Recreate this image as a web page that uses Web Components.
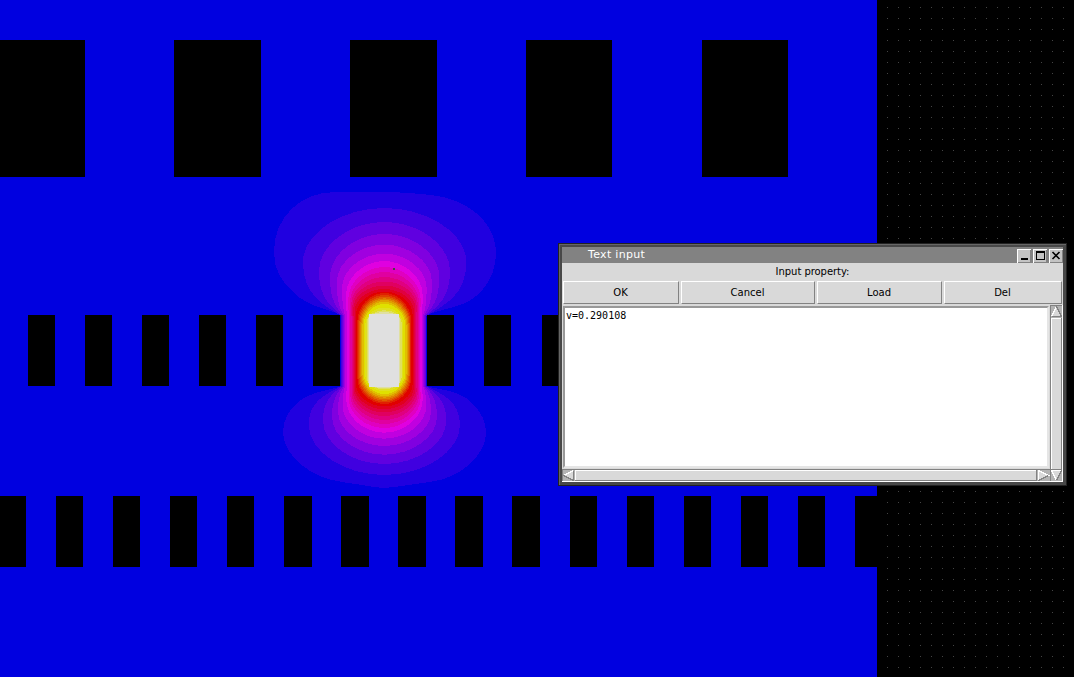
<!DOCTYPE html>
<html lang="en"><head><meta charset="utf-8"><title>Potential field</title>
<style>html,body{margin:0;background:#000;overflow:hidden}</style></head><body>
<field-app></field-app>
<script>
const define=(name,html,init)=>customElements.define(name,class extends HTMLElement{
  constructor(){super();this.attachShadow({mode:'open'}).innerHTML=html;if(init)init(this.shadowRoot,this);}
});

// Equipotential plot: nested contours under the black conductors.
define('field-plot',`<style>:host{display:block;width:1074px;height:677px}svg{display:block}</style>
<svg width="1074" height="677" shape-rendering="crispEdges">
<defs><pattern id="d" x="887" y="7" width="11" height="11" patternUnits="userSpaceOnUse"><rect width="1" height="1" fill="#444"/></pattern></defs>
<rect width="1074" height="677" fill="#000"/><rect x="887" width="187" height="677" fill="url(#d)"/>
<rect width="877" height="677" fill="#0000e0"/><g id="c"></g><g id="b" fill="#000"></g></svg>`,root=>{
  // top, upper y, upper left/right, waist left/right, lower left/right, lower y, bottom, colour
  const L=[
   [208,262,303,466.3,341.4,426.1,308.7,460,425,475,'#4000e0'],
   [222,271,319,450,342.2,425.5,323,446.3,421,464,'#6000e0'],
   [234,277,330,439.3,343,424.8,332,437,417,454.7,'#8000e0'],
   [244.7,282,336.7,432,343.8,424,338,431,412,446,'#a000e0'],
   [253.7,288,342,426.7,345,423,342.7,426.3,406,438.7,'#c000e0'],
   [261,295,346,422.7,347,421.5,346.3,422.7,400,432.7,'#e000e0'],
   [267,299,348.3,420.6,349,420.2,348.7,420.6,398,428,'#e000c0'],
   [272,302,350,419,350.4,418.7,350.3,419,395,424,'#e000a0'],
   [277,304,351.2,417.8,351.5,417.5,351.5,417.8,393,420,'#e00080'],
   [281.5,306,352.3,416.6,352.5,416.3,352.6,416.6,391,416,'#e00060'],
   [285.5,308,353.4,415.3,353.5,415.1,353.7,415.3,389,412.5,'#e00040'],
   [289,311,354.5,414,354.5,413.8,354.8,414,387,409.3,'#e00020'],
   [291.5,315,356,412.7,355.8,412.7,356,412.7,384,406.5,'#e00000'],
   [293,321,357.4,411.2,357.4,411.2,357.4,411.2,378,404,'#e02000'],
   [295,322,358.3,410.3,358.3,410.3,358.3,410.3,377,402.3,'#e04000'],
   [296.7,323,359.3,409.5,359.3,409.5,359.3,409.5,376,400.8,'#e06000'],
   [298.3,324,360.3,408.6,360.3,408.6,360.3,408.6,375,399.2,'#e08000'],
   [300,325,361.3,407.6,361.3,407.6,361.3,407.6,374,397.7,'#e0a000'],
   [301.8,325,362.4,406.5,362.4,406.5,362.4,406.5,374,396,'#e0c000'],
   [304,325,363.6,405.2,363.6,405.2,363.6,405.2,374,394,'#e0e000'],
   [307.5,324,365.4,403.2,365.4,403.2,365.4,403.2,376,391.3,'#e0e020'],
   [310.2,322,366.6,401.5,366.6,401.5,366.6,401.5,378,389.4,'#e0e060'],
   [312,320,367.6,400.4,367.6,400.4,367.6,400.4,381,388.3,'#e0e0a0']];
  let s='<path fill="#2000e0" d="M342 315C325 308 309 307 294 293C280 280 274 269 274 251C274 218 300 192 335 192L400 192.5C419 194 441 194 458 202C482 212 496 232 496 253C496 279 479 299 460 305C447 309 438 311 426 315V386C440 390 458 390 471 402C482 412 486 423 486 433C486 454 462 478 430 482C412 484 400 487 384 488C370 487 358 484 342 482C310 478 283 455 283 432C283 421 288 411 297 403C311 391 328 391 342 386Z"/>';
  for(const [t,u,a,b,w,x,p,q,v,m,f] of L){
    const c=384.3,k=.53,U=Math.max(316,u),V=Math.min(386,v);
    s+=`<path fill="${f}" d="M${w} ${U}C${w-(w-a)*.5} ${U-(U-u)*.22} ${a} ${u+(U-u)*.6} ${a} ${u}C${a} ${u-(u-t)*k} ${c-(c-a)*k} ${t} ${c} ${t}C${c+(b-c)*k} ${t} ${b} ${u-(u-t)*k} ${b} ${u}C${b} ${u+(U-u)*.6} ${x+(b-x)*.5} ${U-(U-u)*.22} ${x} ${U}V${V}C${x+(q-x)*.5} ${V+(v-V)*.22} ${q} ${v-(v-V)*.6} ${q} ${v}C${q} ${v+(m-v)*k} ${c+(q-c)*k} ${m} ${c} ${m}C${c-(c-p)*k} ${m} ${p} ${v+(m-v)*k} ${p} ${v}C${p} ${v-(v-V)*.6} ${w-(w-p)*.5} ${V+(v-V)*.22} ${w} ${V}Z"/>`;
  }
  s+='<rect x="369" y="314" width="30" height="73" fill="#e0e0e0"/><rect x="393" y="268" width="2" height="2" fill="#444"/>';
  root.getElementById('c').innerHTML=s;
  const bar=(y,h)=>([l,r])=>`<rect x="${l}" y="${y}" width="${r-l}" height="${h}"/>`;
  root.getElementById('b').innerHTML=
   [[0,85],[174,261],[350,437],[526,612],[702,788]].map(bar(40,137)).join('')+
   [[28,55],[85,112],[142,169],[199,226],[256,283],[313,340],[427,454],[484,511],[542,569]].map(bar(315,71)).join('')+
   [[0,26],[56,83],[113,140],[170,197],[227,254],[284,312],[341,369],[398,426],[455,483],[512,540],[570,597],[627,654],[684,711],[741,768],[798,825],[855,878]].map(bar(496,71)).join('');
});

define('push-button',`<style>:host{display:block;box-sizing:border-box;height:23px;border:1px solid #fff;border-right-color:#828282;border-bottom-color:#828282;background:#d9d9d9;text-align:center;padding-right:1px;font:10px/21px "DejaVu Sans",sans-serif;color:#000}</style><slot></slot>`);

define('title-bar',`<style>:host{display:flex;align-items:flex-end;height:16px;background:#828282;color:#fff;font:11px/15px "DejaVu Sans",sans-serif;letter-spacing:.32px}
span{flex:1;padding-left:26px;height:16px}svg{display:block}</style><span><slot></slot></span>
<svg width="46" height="14" shape-rendering="crispEdges"><path fill="#c3c3c3" d="M0 0h14v14H0zM16 0h14v14H16zM32 0h14v14H32z"/><path fill="#fff" d="M0 0h14v1H1v13H0zM16 0h14v1H17v13h-1zM32 0h14v1H33v13h-1z"/><path fill="#828282" d="M13 1h1v13H1v-1h12zM29 1h1v13H17v-1h12zM45 1h1v13H33v-1h12z"/><path d="M4 9h7v2H4z"/><path fill-rule="evenodd" d="M19 2h9v9h-9zM20 4v6h7V4z"/><path shape-rendering="auto" d="M35.5 3l7 7M42.5 3l-7 7" stroke="#000" stroke-width="1.6"/></svg>`);

define('scroll-x',`<style>:host{display:block;height:13px}svg{display:block}</style><svg width="488" height="13" shape-rendering="crispEdges"><rect width="488" height="13" fill="#b3b3b3"/><path fill="#828282" d="M0 0h488v1H1v12H0z"/><path fill="#fff" d="M0 12h488v1H0z"/><rect x="13" y="1" width="462" height="11" fill="#d9d9d9"/><path d="M13.5 12V1.5H474" fill="none" stroke="#fff"/><path d="M13 11.5H474.5V1" fill="none" stroke="#828282"/><path d="M11.5 1.5L1.5 6.5l10 5z" fill="#d9d9d9"/><path d="M11.5 1.5L1.5 6.5" stroke="#fff"/><path d="M1.5 6.5l10 5v-10" fill="none" stroke="#828282"/><path d="M476.5 11.5v-10l10 5z" fill="#d9d9d9" stroke="#fff"/><path d="M476.5 11.5l10-5" stroke="#828282"/></svg>`);
define('scroll-y',`<style>:host{display:block;width:13px}svg{display:block}</style><svg width="13" height="177" shape-rendering="crispEdges"><rect width="13" height="177" fill="#b3b3b3"/><path fill="#828282" d="M0 0h13v1H1v176H0z"/><path fill="#fff" d="M12 0h1v177H0v-1h12z"/><rect x="1" y="13" width="11" height="151" fill="#d9d9d9"/><path d="M1.5 164V13.5H12" fill="none" stroke="#fff"/><path d="M1 164.5H11.5V13" fill="none" stroke="#828282"/><path d="M6.5 1.5l5 10h-10z" fill="#d9d9d9"/><path d="M1.5 11.5l5-10" stroke="#fff"/><path d="M6.5 1.5l5 10h-10" fill="none" stroke="#828282"/><path d="M1.5 165.5h10l-5 10z" fill="#d9d9d9"/><path d="M11.5 165.5h-10l5 10" fill="none" stroke="#fff"/><path d="M6.5 175.5l5-10" stroke="#828282"/></svg>`);

define('input-dialog',`<style>:host{display:block;box-sizing:border-box;width:509px;height:243px;background:#484848;border:1px solid #222;padding:3px;box-shadow:inset 1px 1px #666}
.in{background:#d9d9d9;width:501px;height:219px}
.label{font:10px/18px "DejaVu Sans",sans-serif;letter-spacing:-.05px;text-align:center;height:18px}
.buttons{display:grid;grid-template-columns:116px 134px 125px 118px;gap:2px;padding-left:1px;height:24px}
.body{display:grid;grid-template-columns:488px 13px}
.text{box-sizing:border-box;height:162px;margin:1px 1px 1px;background:#fff;border:2px solid #999;border-right-color:#e5e5e5;border-bottom-color:#e5e5e5;font:10px/15px "DejaVu Sans Mono",monospace;padding-left:1px;color:#000}
.left{display:flex;flex-direction:column}</style>
<title-bar>Text input</title-bar><div class="in"><div class="label">Input property:</div>
<div class="buttons"><push-button>OK</push-button><push-button>Cancel</push-button><push-button>Load</push-button><push-button>Del</push-button></div>
<div class="body"><div class="left"><div class="text">v=0.290108</div><scroll-x></scroll-x></div><scroll-y></scroll-y></div></div>`);

define('field-app',`<style>:host{display:block;position:relative;width:1074px;height:677px}input-dialog{position:absolute;left:558px;top:243px}</style><field-plot></field-plot><input-dialog></input-dialog>`);
</script></body></html>
